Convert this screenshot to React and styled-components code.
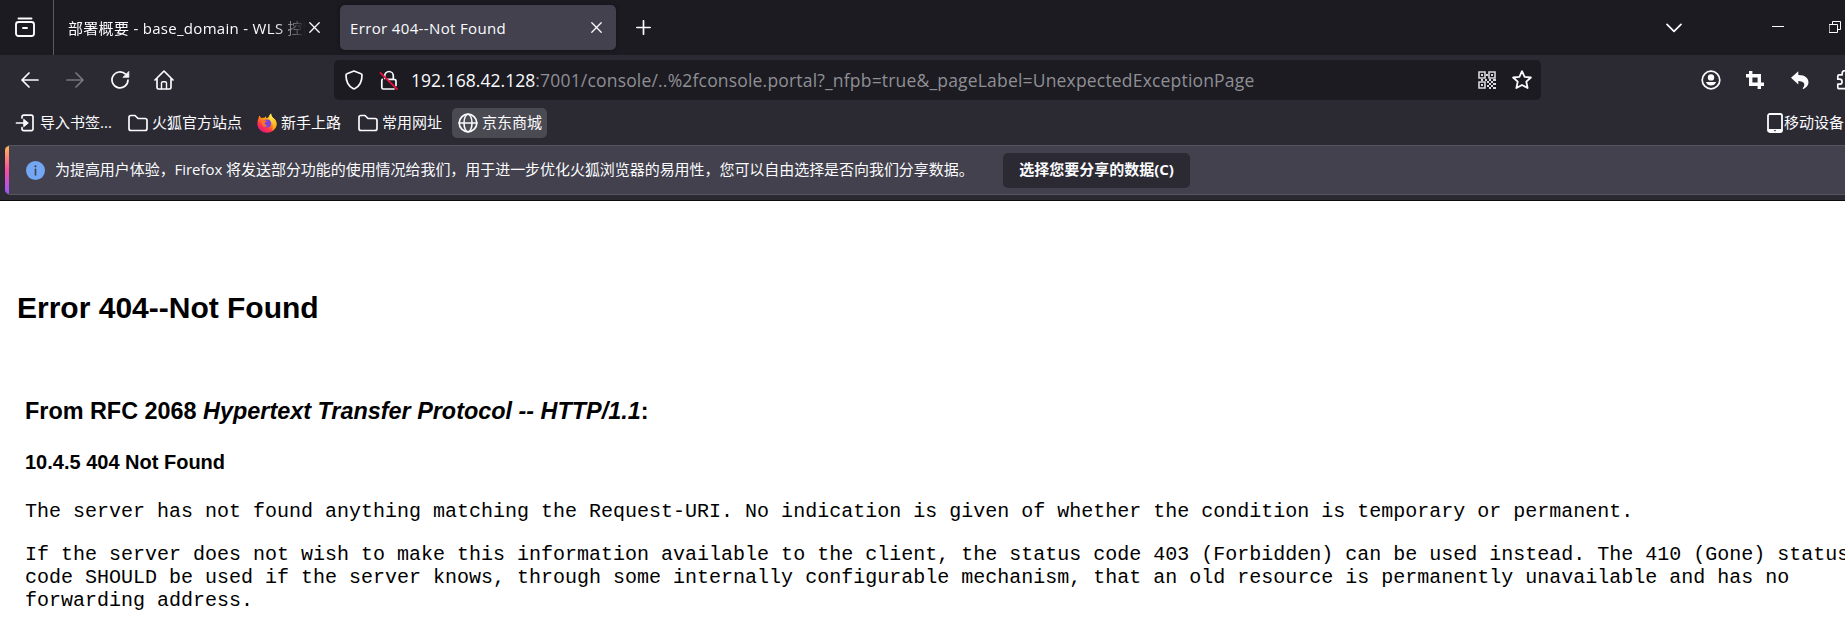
import React from 'react';
import styled, { createGlobalStyle } from 'styled-components';

const Global = createGlobalStyle`
  * { box-sizing: border-box; }
  html, body { margin: 0; background: #fff; overflow: hidden; }
  svg { display: block; flex: none; }
`;

const Window = styled.div`
  width: 1845px;
  height: 644px;
  overflow: hidden;
  color: #fbfbfe;
  font: 15px/20px 'Open Sans', 'Noto Sans CJK SC', sans-serif;
  white-space: nowrap;
`;

const TabStrip = styled.div`
  display: flex;
  align-items: center;
  width: 100%;
  height: 55px;
  overflow: hidden;
  background: #1c1b22;
`;

const ViewButton = styled.div`
  display: flex;
  align-items: center;
  width: 54px;
  height: 55px;
  flex: none;
  padding-left: 15px;
  border-right: 1px solid #5b5a62;
`;

const Tab = styled.div`
  display: flex;
  align-items: center;
  flex: none;
  width: 276px;
  height: 45px;
  padding: 0 ${(p) => (p.$active ? 14 : 10)}px 0 ${(p) => (p.$active ? 10 : 14)}px;
  border-radius: 5px;
  background: ${(p) => (p.$active ? '#42414d' : 'transparent')};
  box-shadow: ${(p) => (p.$active ? '0 0 4px rgba(0,0,0,.4)' : 'none')};
  margin-left: ${(p) => (p.$active ? 10 : 0)}px;
`;

const TabTitle = styled.span`
  flex: 1;
  overflow: hidden;
  font-size: 15px;
  letter-spacing: ${(p) => p.$track || 0}px;
  ${(p) => p.$fade && 'mask-image: linear-gradient(to left, transparent, #000 32px);'}
`;

const Slot = styled.div`
  display: flex;
  flex: none;
  margin-left: ${(p) => p.$gap || 0}px;
`;

const NavBar = styled.div`
  display: flex;
  align-items: center;
  height: 50px;
  overflow: hidden;
  background: #2b2a33;
`;

const UrlBox = styled.div`
  display: flex;
  align-items: center;
  flex: none;
  width: 1207px;
  height: 40px;
  margin-left: 160px;
  padding: 0 9px 0 11px;
  border-radius: 5px;
  background: #1c1b22;
`;

const Url = styled.div`
  flex: 1;
  margin-left: 12px;
  color: #8f8f94;
  font-size: 17.5px;
  line-height: 24px;
  letter-spacing: 0.185px;
`;

const Host = styled.span`
  color: #fbfbfe;
  letter-spacing: 0.03px;
`;

const BookmarkBar = styled.div`
  display: flex;
  align-items: center;
  height: 40px;
  padding: 0 0 4px 9px;
  overflow: hidden;
  background: #2b2a33;
`;

const Bookmark = styled.div`
  display: flex;
  align-items: center;
  flex: none;
  gap: ${(p) => p.$gap ?? 4}px;
  width: ${(p) => p.$width}px;
  height: 30px;
  padding-left: 6px;
  margin-left: ${(p) => p.$offset || 0}px;
  border-radius: 5px;
  background: ${(p) => (p.$active ? '#4a4a52' : 'transparent')};
`;

const Label = styled.span`
  padding-bottom: 2px;
`;

const NoticeArea = styled.div`
  height: 56px;
  padding: 0 0 5px 5px;
  background: #2b2a33;
  border-bottom: 1px solid #0c0c0d;
`;

const Notice = styled.div`
  display: flex;
  align-items: center;
  height: 50px;
  border: 1px solid #55545f;
  border-width: 1px 0 1px 0;
  border-radius: 5px 0 0 5px;
  background: #42414d;
  overflow: hidden;
`;

const Stripe = styled.div`
  width: 4px;
  height: 50px;
  background: linear-gradient(#ffbd4f 0%, #ff4aa2 50%, #9059ff 100%);
`;

const NoticeText = styled.span`
  width: 947px;
  padding: 0 0 2px 10px;
  letter-spacing: -0.05px;
  flex: none;
`;

const NoticeButton = styled.button`
  width: 187px;
  height: 35px;
  padding: 0 0 2px;
  border: 0;
  border-radius: 5px;
  background: #2b2a33;
  color: #fbfbfe;
  font: 700 15px/20px 'Open Sans', 'Noto Sans CJK SC', sans-serif;
`;

const Page = styled.main`
  height: 443px;
  padding: 90px 0 0 25px;
  background: #fff;
  color: #000;
  font-family: 'Liberation Sans', Arial, sans-serif;
`;

const Title = styled.h2`
  margin: 0 0 0 -8px;
  font-size: 30px;
  line-height: 34px;
`;

const Section = styled.h3`
  margin: 73px 0 0;
  font-size: 23.4px;
  line-height: 26px;
`;

const SubSection = styled.h4`
  margin: 27px 0 0;
  font-size: 20px;
  line-height: 23px;
`;

const Paragraph = styled.p`
  margin: ${(p) => p.$top}px 0 0;
  font: 20px/23px 'Liberation Mono', 'Courier New', monospace;
`;

const Icon = ({ w = 20, h = w, sw = 1.7, box, children, color = '#fbfbfe' }) => (
  <svg width={w} height={h} viewBox={box || `0 0 ${w} ${h}`} fill="none" stroke={color}
    strokeWidth={sw} strokeLinecap="round" strokeLinejoin="round">{children}</svg>
);

const Close = () => (
  <Icon w={11} sw={1.3}><path d="M.8 .8l9.4 9.4M10.2 .8L.8 10.2" /></Icon>
);

const Folder = () => (
  <Icon w={20} h={18}>
    <path d="M1 3.5Q1 1.5 3 1.5H7L10 4.5H17Q19 4.5 19 6.5V14.5Q19 16.5 17 16.5H3Q1 16.5 1 14.5Z" />
  </Icon>
);

const FirefoxLogo = () => (
  <svg width="20" height="20" viewBox="0 0 20 20">
    <defs>
      <linearGradient id="flame" x1="16" y1="2" x2="5" y2="19" gradientUnits="userSpaceOnUse">
        <stop offset="0" stopColor="#fff44f" />
        <stop offset=".4" stopColor="#ff980e" />
        <stop offset=".72" stopColor="#ff3647" />
        <stop offset="1" stopColor="#e31587" />
      </linearGradient>
      <linearGradient id="tail" x1="14" y1="1" x2="18" y2="15" gradientUnits="userSpaceOnUse">
        <stop offset="0" stopColor="#fff44f" />
        <stop offset="1" stopColor="#ffa21c" />
      </linearGradient>
    </defs>
    <path d="M1.8 4.2L2.3 2.6L4.2 5Q6 4.4 7.4 4.8L9 3.2L9.2 5.3Q11 5 11.7 3.8Q12.3 1.6 14 .4Q14 3 16.2 5L18 6.6Q19.8 9 19.5 12A9.6 8.6 0 0 1 .4 12Q0 8 1.8 4.2Z" fill="url(#flame)" />
    <path d="M14 .4Q14 3 16.2 5L18 6.6Q20.5 10 19 14Q17.4 17 15 17.6Q17 13 14.6 9Q10.6 5.4 14 .4Z" fill="url(#tail)" />
    <circle cx="10" cy="10.5" r="4" fill="#7542e5" />
    <path d="M4.4 8.2Q6.5 6.4 9.8 8Q9.4 9.2 7.6 9.7Q8.2 12.5 11 12.6Q8 14.8 5.5 12.5Z" fill="#ff7028" />
  </svg>
);

const QrIcon = () => (
  <svg width="18" height="18" viewBox="0 0 18 18" fill="none" stroke="#d8d8dc" strokeWidth="1.6">
    <path d="M1 1h6v6H1zM11 1h6v6h-6zM1 11h6v6H1z" />
    <path fill="#d8d8dc" stroke="none" d="M3 3h2v2H3zM13 3h2v2h-2zM3 13h2v2H3zM8 3h2v2H8zM3 8h2v2H3zM7 8h2v2H7zM9 10h2v2H9zM11 8h2v2h-2zM15 8h3v2h-3zM13 10h2v2h-2zM11 12h2v2h-2zM15 12h3v2h-3zM9 14h2v2H9zM13 14h2v2h-2zM11 16h2v2h-2zM15 16h3v2h-3z" />
  </svg>
);

export default function App() {
  return (
    <Window>
      <Global />
      <TabStrip>
        <ViewButton>
          <Icon h={21} sw={1.9}>
            <path d="M3.5 1.5H16.5" />
            <rect x="1" y="5" width="18" height="14" rx="2.5" />
            <path d="M8 11H12" />
          </Icon>
        </ViewButton>
        <Tab>
          <TabTitle $fade $track={0.3}>部署概要 - base_domain - WLS 控制台</TabTitle>
          <Slot $gap={3}><Close /></Slot>
        </Tab>
        <Tab $active>
          <TabTitle $track={0.36}>Error 404--Not Found</TabTitle>
          <Close />
        </Tab>
        <Slot $gap={20}><Icon w={15} sw={1.7}><path d="M7.5 .8V14.2M.8 7.5H14.2" /></Icon></Slot>
        <Slot $gap={1015}><Icon w={16} h={10}><path d="M1 1.3L8 8.3L15 1.3" /></Icon></Slot>
        <Slot $gap={90}><Icon w={12} h={3} sw={1}><path strokeLinecap="butt" d="M0 .5H12" /></Icon></Slot>
        <Slot $gap={45}>
          <Icon w={12} h={13} sw={1}><path strokeLinejoin="miter" d="M.5 3.5H8.5V11.5H.5ZM3.5 3V.5H11.5V8.5H9" /></Icon>
        </Slot>
      </TabStrip>
      <NavBar>
        <Slot $gap={21}><Icon w={18} h={16}><path d="M17 8H1M8 1L1 8L8 15" /></Icon></Slot>
        <Slot $gap={27}><Icon w={18} h={16} color="#77767e"><path d="M1 8H17M10 1L17 8L10 15" /></Icon></Slot>
        <Slot $gap={27}>
          <Icon w={19} h={20}>
            <path d="M17 10A8 8 0 1 1 14.6 4.2" />
            <path d="M17.8 1.8V7.3H12.3Z" fill="#fbfbfe" strokeWidth=".8" />
          </Icon>
        </Slot>
        <Slot $gap={24}>
          <Icon>
            <path d="M1 10L9.5 1.5Q10 1 10.5 1.5L19 10M3 8.6V17.5Q3 19 4.5 19H15.5Q17 19 17 17.5V8.6" />
            <path d="M7.5 18.8V13Q7.5 11.7 9 11.7H11Q12.5 11.7 12.5 13V18.8" strokeWidth="1.4" />
          </Icon>
        </Slot>
        <UrlBox>
          <Icon w={18} h={20}>
            <path d="M9 1L16 3.7Q17 4 17 5.2C17 11.5 14.5 16 10 18.6Q9 19.2 8 18.6C3.5 16 1 11.5 1 5.2Q1 4 2 3.7Z" />
          </Icon>
          <Slot $gap={16}>
            <Icon w={20} h={20}>
              <path d="M5.7 8.4V5.8A4.3 4.3 0 0 1 14.3 5.8V8.5M3.2 9.5Q2.8 10 2.8 11V17.5Q2.8 19 4.3 19H15M8.5 9.3H15Q17 9.3 17 11.3V15.5" />
              <path d="M1.5 2.8L18 19.2" stroke="#e7113f" strokeWidth="1.8" />
            </Icon>
          </Slot>
          <Url><Host>192.168.42.128</Host>:7001/console/..%2fconsole.portal?_nfpb=true&amp;_pageLabel=UnexpectedExceptionPage</Url>
          <QrIcon />
          <Slot $gap={16}>
            <Icon sw={1.8}>
              <path d="M10 1.2L12.6 6.8L18.9 7.5L14.3 11.7L15.6 18L10 15L4.4 18L5.7 11.7L1.1 7.5L7.4 6.8Z" />
            </Icon>
          </Slot>
        </UrlBox>
        <Slot $gap={160}>
          <Icon>
            <circle cx="10" cy="10" r="8.8" />
            <circle cx="10" cy="7.4" r="3.2" fill="#fbfbfe" stroke="none" />
            <path d="M4.8 12H15.2Q13.6 15.6 10 15.6T4.8 12Z" fill="#fbfbfe" stroke="none" />
          </Icon>
        </Slot>
        <Slot $gap={25}>
          <Icon w={18} sw={3.4}>
            <path strokeLinecap="butt" strokeLinejoin="miter" d="M4.7 0V13.3H18M0 4.7H13.3V18" />
          </Icon>
        </Slot>
        <Slot $gap={27}>
          <svg width="18" height="18" viewBox="0 0 18 18" fill="#fbfbfe">
            <path d="M0 6.8L7.3 .2V4C14 3.8 17.5 7.2 17.5 11.6Q17.5 15.5 12.6 18Q10.8 17.8 12.4 16.3Q14.2 13.8 12.4 11.6Q11 10 7.3 10V13.4Z" />
          </svg>
        </Slot>
        <Slot $gap={27}>
          <Icon>
            <path d="M1.8 8V6.2Q1.8 4.8 3.2 4.8H6.2V3.2A2.5 2.5 0 0 1 11.2 3.2V4.8H14V18.6H3Q1.8 18.6 1.8 17.4V14.2H3.6A2 2 0 0 0 3.6 9.2H1.8Z" />
          </Icon>
        </Slot>
      </NavBar>
      <BookmarkBar>
        <Bookmark $width={113} $gap={5}>
          <Icon w={20} h={18}>
            <path d="M7 4V3Q7 1.2 8.8 1.2H16.2Q18 1.2 18 3V14.8Q18 16.6 16.2 16.6H8.8Q7 16.6 7 14.8V13.5M1.5 9H10" />
            <path d="M9 5.5L13.3 9L9 12.5Z" fill="#fbfbfe" strokeWidth="1" />
          </Icon>
          <Label>导入书签...</Label>
        </Bookmark>
        <Bookmark $width={129}><Folder /><Label>火狐官方站点</Label></Bookmark>
        <Bookmark $width={101}><FirefoxLogo /><Label>新手上路</Label></Bookmark>
        <Bookmark $width={100}><Folder /><Label>常用网址</Label></Bookmark>
        <Bookmark $width={95} $active>
          <Icon>
            <circle cx="10" cy="10" r="8.8" />
            <ellipse cx="10" cy="10" rx="4" ry="8.8" strokeWidth="1.5" />
            <path d="M1 10H19" strokeWidth="1.5" />
          </Icon>
          <Label>京东商城</Label>
        </Bookmark>
        <Bookmark $width={90} $offset={1214} $gap={1}>
          <Icon w={16} h={20} sw={1.8}>
            <rect x="1" y="1" width="14" height="18" rx="1.8" />
            <path d="M2 17.3H14" strokeWidth="2.4" />
            <path d="M7.7 17.6H8.3" stroke="#2b2a33" strokeWidth="1.2" />
          </Icon>
          <Label>移动设备</Label>
        </Bookmark>
      </BookmarkBar>
      <NoticeArea>
        <Notice>
          <Stripe />
          <Slot $gap={17}>
            <svg width="19" height="19" viewBox="0 0 19 19">
              <circle cx="9.5" cy="9.5" r="9.5" fill="#73a7f3" />
              <path d="M9.5 8.2V14" stroke="#42414d" strokeWidth="1.6" strokeLinecap="round" />
              <circle cx="9.5" cy="5.3" r="1.1" fill="#42414d" />
            </svg>
          </Slot>
          <NoticeText>为提高用户体验，Firefox 将发送部分功能的使用情况给我们，用于进一步优化火狐浏览器的易用性，您可以自由选择是否向我们分享数据。</NoticeText>
          <Slot $gap={11}><NoticeButton>选择您要分享的数据(C)</NoticeButton></Slot>
        </Notice>
      </NoticeArea>
      <Page>
        <Title>Error 404--Not Found</Title>
        <Section>From RFC 2068 <i>Hypertext Transfer Protocol -- HTTP/1.1</i>:</Section>
        <SubSection>10.4.5 404 Not Found</SubSection>
        <Paragraph $top={26}>
          The server has not found anything matching the Request-URI. No indication is given of whether the condition is temporary or permanent.
        </Paragraph>
        <Paragraph $top={20}>
          If the server does not wish to make this information available to the client, the status code 403 (Forbidden) can be used instead. The 410 (Gone) status<br />
          code SHOULD be used if the server knows, through some internally configurable mechanism, that an old resource is permanently unavailable and has no<br />
          forwarding address.
        </Paragraph>
      </Page>
    </Window>
  );
}
